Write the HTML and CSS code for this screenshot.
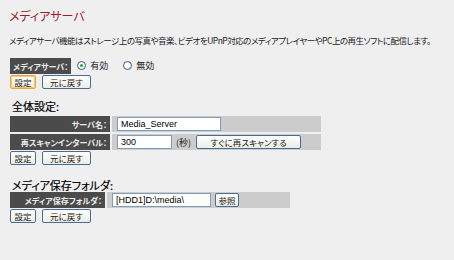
FILE: index.html
```html
<!DOCTYPE html>
<html lang="ja">
<head>
  <meta charset="UTF-8">
  <title>メディアサーバ</title>
  <link rel="stylesheet" href="styles.css">
</head>
<body>

  <!-- Page title -->
  <h1 class="page-title">メディアサーバ</h1>
  <p class="desc">メディアサーバ機能はストレージ上の写真や音楽、ビデオをUPnP対応のメディアプレイヤーやPC上の再生ソフトに配信します。</p>

  <!-- Enable / disable -->
  <form class="block first">
    <table class="form-table">
      <tr>
        <th class="label">メディアサーバ：</th>
        <td class="plain">
          <label class="radio"><span class="dot on"></span>有効</label>
          <label class="radio"><span class="dot"></span>無効</label>
        </td>
      </tr>
    </table>
    <div class="buttons">
      <button type="button" class="btn focus">設定</button>
      <button type="button" class="btn wide">元に戻す</button>
    </div>
  </form>

  <!-- General settings -->
  <form class="block">
    <h2 class="section general">全体設定:</h2>
    <table class="form-table">
      <tr>
        <th class="label w-general">サーバ名：</th>
        <td class="value w-general-val">
          <input class="text name" type="text" value="Media_Server">
        </td>
      </tr>
      <tr>
        <th class="label">再スキャンインターバル：</th>
        <td class="value">
          <input class="text short" type="text" value="300">
          <span class="unit">(秒)</span>
          <button type="button" class="btn rescan">すぐに再スキャンする</button>
        </td>
      </tr>
    </table>
    <div class="buttons">
      <button type="button" class="btn">設定</button>
      <button type="button" class="btn wide">元に戻す</button>
    </div>
  </form>

  <!-- Media folder -->
  <form class="block">
    <h2 class="section folder-head">メディア保存フォルダ:</h2>
    <table class="form-table">
      <tr>
        <th class="label w-folder">メディア保存フォルダ：</th>
        <td class="value w-folder-val">
          <input class="text folder" type="text" value="[HDD1]D:\media\">
          <button type="button" class="btn browse">参照</button>
        </td>
      </tr>
    </table>
    <div class="buttons">
      <button type="button" class="btn">設定</button>
      <button type="button" class="btn wide">元に戻す</button>
    </div>
  </form>

</body>
</html>
```

FILE: styles.css
```css
/* Page base */
body {
  margin: 0;
  padding: 8px 9px;
  background-color: #efefef;
  color: #222;
  font-family: "Noto Sans CJK JP", "DejaVu Sans", sans-serif;
  font-size: 9px;
  font-feature-settings: "palt";
}

/* Title */
.page-title {
  margin: 0;
  color: #a01a2a;
  font-size: 12px;
  font-weight: normal;
  line-height: 16px;
}

.desc {
  margin: 10px 0 0 0;
  font-size: 8.5px;
  letter-spacing: -0.5px;
  line-height: 12px;
  white-space: nowrap;
}

/* Blocks */
.block {
  margin: 0;
}

.block.first {
  margin-top: 12px;
}

.section {
  margin: 10px 0 3px 3px;
  font-size: 11px;
  font-weight: normal;
  line-height: 14px;
  color: #000;
  -webkit-text-stroke: 0.2px #000;
}

.section.folder-head {
  margin: 14px 0 0 3px;
  line-height: 13px;
}

/* Form tables */
.form-table {
  border-collapse: separate;
  border-spacing: 2px 2px;
  margin: -2px 0 -2px -1px;
}

.form-table th,
.form-table td {
  padding: 0;
  height: 16px;
}

.label {
  background-color: #4b4b4b;
  color: #ececec;
  font-size: 8px;
  font-weight: bold;
  text-align: right;
  padding: 0 3px 0 3px !important;
  white-space: nowrap;
}

.w-general {
  width: 94px;
}

.w-folder {
  width: 89px;
}

.value {
  background-color: #cccccc;
  padding-left: 5px !important;
}

.w-general-val {
  width: 204px;
}

.w-folder-val {
  width: 178px;
}

.plain {
  padding-left: 4px !important;
}

/* Radios */
.radio {
  display: inline-flex;
  align-items: center;
  gap: 4px;
  margin-right: 13px;
}

.dot {
  width: 9px;
  height: 9px;
  border: 1px solid #2a5a8a;
  border-radius: 50%;
  background-color: #fff;
  box-sizing: border-box;
  position: relative;
}

.dot.on::after {
  content: "";
  position: absolute;
  left: 2px;
  top: 2px;
  width: 3px;
  height: 3px;
  border-radius: 50%;
  background-color: #2aa02a;
}

/* Inputs */
.text {
  height: 14px;
  box-sizing: border-box;
  border: 1px solid #7f9db9;
  background-color: #fff;
  font-family: "Liberation Sans", sans-serif;
  font-size: 9px;
  padding: 0 3px;
  vertical-align: middle;
}

.name {
  width: 104px;
}

.short {
  width: 55px;
}

.folder {
  width: 99px;
}

.unit {
  margin: 0 3px 0 2px;
  vertical-align: middle;
}

/* Buttons */
.buttons {
  display: flex;
  gap: 6px;
  margin: 1px 0 0 1px;
}

.btn {
  height: 14px;
  width: 26px;
  padding: 0 2px;
  border: 1px solid #4a6c94;
  border-radius: 2px;
  background: linear-gradient(#ffffff, #ececE4);
  color: #222;
  font-family: "Noto Sans CJK JP", sans-serif;
  font-size: 8.5px;
  font-feature-settings: "palt";
  line-height: 12px;
  cursor: pointer;
  vertical-align: middle;
}

.btn.focus {
  border-color: #e8a840;
  box-shadow: inset 0 0 0 1px #f4c870;
}

.btn.wide {
  width: 49px;
}

.rescan {
  width: 105px;
}

.browse {
  width: 24px;
  margin-left: 2px;
}
```
